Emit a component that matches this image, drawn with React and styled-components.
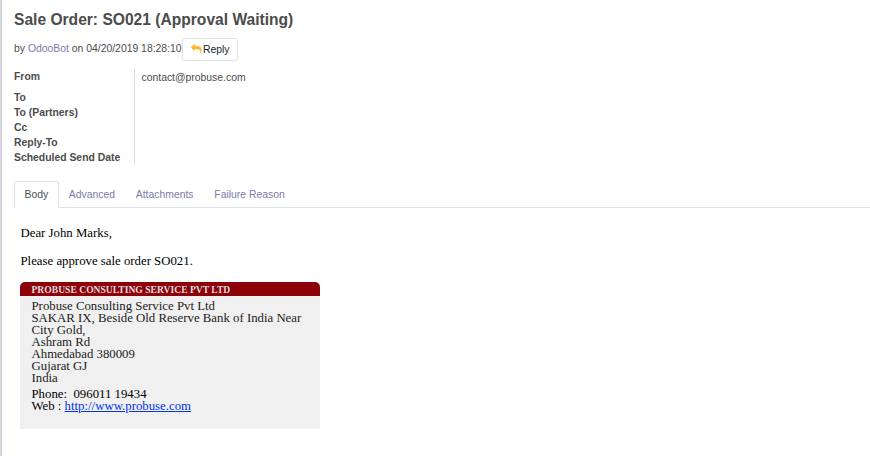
import React from "react";
import styled, { createGlobalStyle } from "styled-components";

const GlobalStyle = createGlobalStyle`
  *, *::before, *::after { box-sizing: border-box; }
  body {
    margin: 0;
    background: #fff;
    color: #4c4c4c;
    font-family: "Liberation Sans", Arial, sans-serif;
    font-size: 10.4px;
    line-height: 15px;
    overflow: hidden;
  }
`;

const Page = styled.main`
  display: grid;
  grid-template-columns: 1px 1px minmax(0, 1fr);
  height: 456px;
`;

const Gutter = styled.div`
  background: repeating-linear-gradient(#e6e7ea 0 1px, #d3d5da 1px 2px);
`;

const Edge = styled.div`
  background: #c8c8d3;
`;

const Sheet = styled.div`
  padding-left: 12px;
`;

const Title = styled.h1`
  margin: 0;
  padding-top: 10px;
  font-size: 15.6px;
  line-height: 19px;
  font-weight: 700;
  white-space: nowrap;
`;

const Byline = styled.div`
  display: flex;
  align-items: flex-start;
  height: 23px;
  margin-top: 9px;
  white-space: pre;
`;

const BylineText = styled.div`
  width: 168px;
  padding-top: 3px;
`;

const Author = styled.a`
  color: #7c7bad;
`;

const ReplyButton = styled.button`
  display: flex;
  align-items: center;
  gap: 1.5px;
  width: 56px;
  height: 23px;
  padding: 0 0 0 8px;
  border: 1px solid #dee2e6;
  border-radius: 3px;
  background: #fff;
  color: #212529;
  font: inherit;
`;

const ReplyIcon = styled.svg`
  width: 10.5px;
  height: 9px;
  margin-top: -2px;
  fill: #fdb82e;
`;

const Fields = styled.dl`
  display: grid;
  grid-template-columns: 121px 1fr;
  grid-template-rows: 21px repeat(5, 15px);
  margin: 8px 0 0;
`;

const FieldLabel = styled.dt`
  border-right: 1px solid #ddd;
  font-weight: 700;
`;

const FieldValue = styled.dd`
  margin: 0;
  padding: 1px 0 0 6.5px;
`;

const Tabs = styled.nav`
  display: flex;
  height: 27px;
  margin-top: 16px;
  border-bottom: 1px solid #dee2e6;
`;

const Tab = styled.a`
  width: ${(p) => p.$width}px;
  height: 27px;
  padding: 5px 0 0 ${(p) => (p.$active ? "9.6px" : "8.8px")};
  border: 1px solid ${(p) => (p.$active ? "#dee2e6" : "transparent")};
  border-bottom-color: ${(p) => (p.$active ? "#fff" : "transparent")};
  border-radius: 3px 3px 0 0;
  background: ${(p) => (p.$active ? "#fff" : "transparent")};
  color: ${(p) => (p.$active ? "#495057" : "#7c7bad")};
  white-space: nowrap;
`;

const Message = styled.article`
  padding: 18px 0 0 6px;
  color: #000;
  font-family: "Liberation Serif", "Times New Roman", serif;
  font-size: 12.8px;
`;

const Paragraph = styled.p`
  margin: 0 0 13px 0.5px;
  line-height: 15px;
`;

const Signature = styled.section`
  width: 300px;
  height: 147px;
  border-radius: 5px 5px 0 0;
  overflow: hidden;
  background: #f0f0f0;
  line-height: 12px;
`;

const SignatureHeader = styled.h2`
  height: 14px;
  margin: 0;
  padding: 1px 0 0 11.5px;
  background: #8e0009;
  color: #ddd;
  font-size: 9.6px;
  line-height: 13px;
  font-weight: 700;
`;

const Address = styled.address`
  padding: 4px 11px 0 11.5px;
  color: #222;
  font-style: normal;
`;

const Contact = styled.div`
  padding: 4px 11px 0 11.5px;
  white-space: pre;
`;

const WebLink = styled.a`
  color: #0433ec;
  text-decoration: underline;
`;

const labels = ["From", "To", "To (Partners)", "Cc", "Reply-To", "Scheduled Send Date"];
const tabs = [
  { name: "Body", width: 45, active: true },
  { name: "Advanced", width: 67 },
  { name: "Attachments", width: 78.5 },
  { name: "Failure Reason", width: 91 },
];
const address = [
  "Probuse Consulting Service Pvt Ltd",
  "SAKAR IX, Beside Old Reserve Bank of India Near City Gold,",
  "Ashram Rd",
  "Ahmedabad 380009",
  "Gujarat GJ",
  "India",
];

export default function App() {
  return (
    <Page>
      <GlobalStyle />
      <Gutter />
      <Edge />
      <Sheet>
        <Title>Sale Order: SO021 (Approval Waiting)</Title>
        <Byline>
          <BylineText>
            by <Author>OdooBot</Author> on 04/20/2019 18:28:10
          </BylineText>
          <ReplyButton>
            <ReplyIcon viewBox="0 0 1792 1536" aria-hidden="true">
              <path d="M1792 1056q0 166-127 451-3 7-10.500 24t-13.500 30-13 22q-12 17-28 17-15 0-23.500-10t-8.500-25q0-9 2.500-26.500t2.500-23.500q5-68 5-123 0-101-17.500-181t-48.500-138.500-80-101-105.500-69.500-133-42.500-154-21.500-175.500-6h-224v256q0 26-19 45t-45 19-45-19l-512-512q-19-19-19-45t19-45l512-512q19-19 45-19t45 19 19 45v256h224q713 0 875 403 53 134 53 333z" />
            </ReplyIcon>
            Reply
          </ReplyButton>
        </Byline>
        <Fields>
          {labels.map((label) => (
            <React.Fragment key={label}>
              <FieldLabel>{label}</FieldLabel>
              <FieldValue>{label === "From" ? "contact@probuse.com" : ""}</FieldValue>
            </React.Fragment>
          ))}
        </Fields>
        <Tabs>
          {tabs.map((tab) => (
            <Tab key={tab.name} $width={tab.width} $active={tab.active}>
              {tab.name}
            </Tab>
          ))}
        </Tabs>
        <Message>
          <Paragraph>Dear John Marks,</Paragraph>
          <Paragraph>Please approve sale order SO021.</Paragraph>
          <Signature>
            <SignatureHeader>PROBUSE CONSULTING SERVICE PVT LTD</SignatureHeader>
            <Address>
              {address.map((line) => (
                <div key={line}>{line}</div>
              ))}
            </Address>
            <Contact>
              <div>{"Phone:  096011 19434"}</div>
              <div>
                Web : <WebLink>http://www.probuse.com</WebLink>
              </div>
            </Contact>
          </Signature>
        </Message>
      </Sheet>
    </Page>
  );
}
